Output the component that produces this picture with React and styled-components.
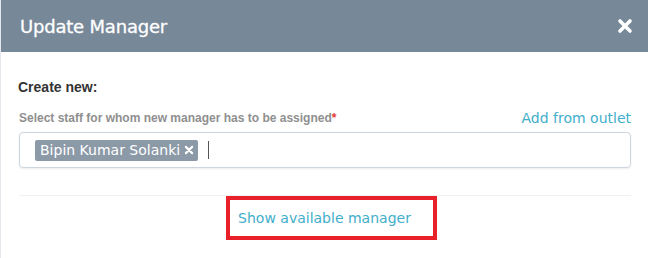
import styled, { createGlobalStyle } from "styled-components";

const GlobalStyle = createGlobalStyle`
  body {
    margin: 0;
    background: #ffffff;
    font-family: "Liberation Sans", Arial, sans-serif;
  }
`;

const Modal = styled.div`
  width: 648px;
  height: 258px;
  background: #fff;
  border-left: 1px solid #e4e8ec;
  box-sizing: border-box;
`;

const Header = styled.div`
  height: 52px;
  background: #778899;
  display: flex;
  align-items: center;
  justify-content: space-between;
  padding: 0 15px 0 19px;
  box-sizing: border-box;
`;

const Title = styled.h4`
  margin: 0;
  color: #fff;
  font-size: 18px;
  font-weight: 400;
  letter-spacing: -0.2px;
  font-family: "DejaVu Sans", sans-serif;
  -webkit-text-stroke: 0.3px #fff;
`;

const Close = styled.button`
  border: none;
  background: none;
  padding: 0;
  width: 16px;
  height: 16px;
  cursor: pointer;
  display: flex;
`;

const Body = styled.div`
  padding: 26px 17px 0 17px;
`;

const SectionTitle = styled.div`
  font-size: 14px;
  font-weight: 700;
  color: #333;
  line-height: 18px;
`;

const LabelRow = styled.div`
  display: flex;
  justify-content: space-between;
  align-items: flex-end;
  margin-top: 14px;
  padding-left: 1px;
`;

const Label = styled.label`
  font-size: 12px;
  font-weight: 700;
  color: #8f8f8f;
  line-height: 16px;
`;

const Required = styled.span`
  color: #e53935;
`;

const Link = styled.a`
  font-family: "DejaVu Sans", sans-serif;
  font-size: 14px;
  color: #42aecb;
  text-decoration: none;
  cursor: pointer;
`;

const TagInput = styled.div`
  margin-top: 6px;
  margin-left: 1px;
  height: 36px;
  border: 1px solid #cdd6de;
  border-radius: 4px;
  box-shadow: 0 1px 2px rgba(0, 0, 0, 0.08);
  box-sizing: border-box;
  display: flex;
  align-items: center;
  padding: 0 15px;
  gap: 10px;
`;

const Tag = styled.span`
  display: inline-flex;
  align-items: center;
  gap: 4px;
  height: 21px;
  padding: 0 4px 0 5px;
  background: #8c9aa8;
  border-radius: 2px;
  color: #fff;
  font-family: "DejaVu Sans", sans-serif;
  font-size: 14px;
`;

const Caret = styled.span`
  width: 1px;
  height: 18px;
  background: #555;
`;

const Divider = styled.div`
  height: 1px;
  background: #eef2f6;
  margin-top: 27px;
  margin-left: 1px;
`;

const Footer = styled.div`
  display: flex;
  justify-content: center;
`;

const Highlight = styled.div`
  border: 4px solid #e8202a;
  height: 44px;
  box-sizing: border-box;
  display: flex;
  align-items: center;
  padding: 0 22px 0 8px;
  margin-left: 14px;
`;

const XIcon = ({ size, stroke, color }) => (
  <svg width={size} height={size} viewBox="0 0 16 16">
    <path d="M3 3 L13 13 M13 3 L3 13" stroke={color} strokeWidth={stroke} strokeLinecap="round" />
  </svg>
);

export default function App() {
  return (
    <>
      <GlobalStyle />
      <Modal>
        <Header>
          <Title>Update Manager</Title>
          <Close aria-label="close">
            <XIcon size={16} stroke={3.6} color="#fff" />
          </Close>
        </Header>
        <Body>
          <SectionTitle>Create new:</SectionTitle>
          <LabelRow>
            <Label>
              Select staff for whom new manager has to be assigned<Required>*</Required>
            </Label>
            <Link>Add from outlet</Link>
          </LabelRow>
          <TagInput>
            <Tag>
              Bipin Kumar Solanki
              <XIcon size={10} stroke={3.4} color="#fff" />
            </Tag>
            <Caret />
          </TagInput>
          <Divider />
          <Footer>
            <Highlight>
              <Link>Show available manager</Link>
            </Highlight>
          </Footer>
        </Body>
      </Modal>
    </>
  );
}
